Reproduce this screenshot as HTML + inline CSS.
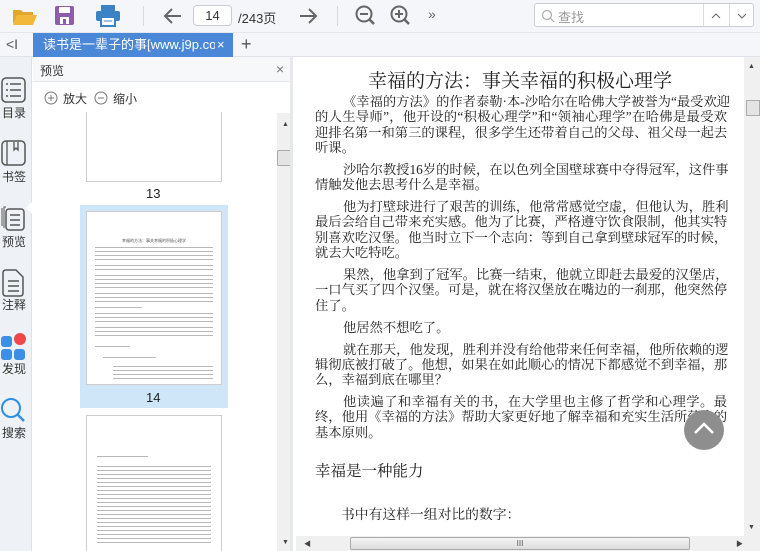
<!DOCTYPE html>
<html><head><meta charset="utf-8"><style>
*{margin:0;padding:0;box-sizing:border-box}
body{width:760px;height:551px;overflow:hidden;background:#fff;font-family:"Liberation Sans","Noto Sans CJK SC",sans-serif;position:relative;font-size:12px;color:#333}
.abs{position:absolute}
#tb{left:0;top:0;width:760px;height:33px;background:#f4f6f9;border-bottom:1px solid #e3e6ea}
#tabs{left:0;top:33px;width:760px;height:24px;background:#f4f6f9;border-bottom:1px solid #dfe3e8}
#side{left:0;top:57px;width:32px;height:494px;background:#eef1f5;border-right:1px solid #dde1e6}
.sl{position:absolute;left:0;width:28px;text-align:center;font-size:12px;color:#333}
#prev{left:33px;top:57px;width:260px;height:494px;background:#fff;border-right:3px solid #e6e8eb;overflow:hidden}
#main{left:296px;top:57px;width:448px;height:479px;background:#fff;overflow:hidden}
#doc{position:absolute;left:19px;top:9px;width:412px;font-family:"Liberation Serif","Noto Serif CJK SC",serif;font-size:13.3px;line-height:15.3px;color:#222}
#doc p{margin-bottom:6.7px}
#doc p span{display:block;white-space:nowrap;text-align:justify;text-align-last:justify}
#doc p span.l{text-align-last:left}
#doc p span.i{padding-left:28px}
.page{position:absolute;left:53px;width:136px;background:#fff;border:1px solid #ccc;overflow:hidden}
.ln{background:repeating-linear-gradient(#888 0 1px,transparent 1px 4px);opacity:.6}
</style></head><body>
<div id="tb" class="abs">
 <svg class="abs" style="left:12px;top:6px" width="26" height="20"><path d="M1 4h8l2 2h10v3H6L1 18z" fill="#e2a52d"/><path d="M5 9h20l-4 10H1z" fill="#f1b83a"/></svg>
 <svg class="abs" style="left:55px;top:6px" width="19" height="19"><rect x="0" y="0" width="19" height="19" rx="2" fill="#8e5bb0"/><rect x="4" y="1" width="11" height="6" fill="#fff"/><rect x="5" y="11" width="9" height="7" fill="#fff"/><rect x="8" y="13" width="3" height="5" fill="#8e5bb0"/></svg>
 <svg class="abs" style="left:96px;top:5px" width="24" height="22"><rect x="5" y="0" width="14" height="6" fill="#3b83c4"/><rect x="0" y="6" width="24" height="10" rx="2" fill="#3b83c4"/><rect x="5" y="12" width="14" height="9" fill="#fff" stroke="#3b83c4" stroke-width="2"/><line x1="8" y1="16" x2="16" y2="16" stroke="#3b83c4"/></svg>
 <div class="abs" style="left:143px;top:6px;width:1px;height:20px;background:#d8dbe0"></div>
 <svg class="abs" style="left:163px;top:7px" width="20" height="18"><path d="M18 9H3M9 2L2 9l7 7" fill="none" stroke="#666" stroke-width="2"/></svg>
 <div class="abs" style="left:193px;top:5px;width:39px;height:21px;border:1px solid #c9cdd3;border-radius:4px;background:#fff;text-align:center;line-height:19px;font-size:13px">14</div>
 <div class="abs" style="left:238px;top:8px;font-size:13px;color:#333">/243页</div>
 <svg class="abs" style="left:298px;top:7px" width="20" height="18"><path d="M2 9h15M11 2l7 7-7 7" fill="none" stroke="#666" stroke-width="2"/></svg>
 <div class="abs" style="left:337px;top:6px;width:1px;height:20px;background:#d8dbe0"></div>
 <svg class="abs" style="left:355px;top:5px" width="22" height="22"><circle cx="9" cy="9" r="7.5" fill="none" stroke="#666" stroke-width="2"/><line x1="5" y1="9" x2="13" y2="9" stroke="#666" stroke-width="2"/><line x1="14" y1="14" x2="19" y2="19" stroke="#666" stroke-width="2.5"/></svg>
 <svg class="abs" style="left:390px;top:5px" width="22" height="22"><circle cx="9" cy="9" r="7.5" fill="none" stroke="#666" stroke-width="2"/><path d="M5 9h8M9 5v8" stroke="#666" stroke-width="2"/><line x1="14" y1="14" x2="19" y2="19" stroke="#666" stroke-width="2.5"/></svg>
 <div class="abs" style="left:428px;top:6px;font-size:14px;color:#666">»</div>
 <div class="abs" style="left:534px;top:3px;width:220px;height:24px;border:1px solid #c9cdd3;border-radius:3px;background:#fff">
  <svg class="abs" style="left:6px;top:5px" width="14" height="14"><circle cx="6" cy="6" r="4.5" fill="none" stroke="#aaa" stroke-width="1.2"/><line x1="9.5" y1="9.5" x2="13" y2="13" stroke="#aaa" stroke-width="1.2"/></svg>
  <div class="abs" style="left:23px;top:3px;font-size:13px;color:#999">查找</div>
  <div class="abs" style="left:168px;top:0;width:1px;height:22px;background:#d8dbe0"></div>
  <div class="abs" style="left:194px;top:0;width:1px;height:22px;background:#d8dbe0"></div>
  <svg class="abs" style="left:176px;top:9px" width="10" height="6"><path d="M1 5l4-4 4 4" fill="none" stroke="#666"/></svg>
  <svg class="abs" style="left:202px;top:9px" width="10" height="6"><path d="M1 1l4 4 4-4" fill="none" stroke="#666"/></svg>
 </div>
</div>
<div id="tabs" class="abs">
 <div class="abs" style="left:6px;top:3px;font-size:14px;color:#555">&lt;I</div>
 <div class="abs" style="left:33px;top:0;width:200px;height:24px;background:#4a87d6;color:#fff;font-size:13px;line-height:24px;padding-left:10px;white-space:nowrap;overflow:hidden">读书是一辈子的事[www.j9p.cor<span style="position:absolute;left:182px;background:#4a87d6;padding-left:2px">×</span></div>
 <div class="abs" style="left:241px;top:0;font-size:18px;color:#555;line-height:22px">+</div>
</div>
<div id="side" class="abs">
 <svg class="abs" style="left:1px;top:20px" width="25" height="26"><rect x="1" y="1" width="23" height="24" rx="4" fill="none" stroke="#555" stroke-width="1.5"/><path d="M5 7h2M9 7h11M5 13h2M9 13h11M5 19h2M9 19h11" stroke="#555" stroke-width="1.5"/></svg>
 <div class="sl" style="top:47px">目录</div>
 <svg class="abs" style="left:1px;top:83px" width="25" height="26"><rect x="1" y="1" width="23" height="24" rx="4" fill="none" stroke="#555" stroke-width="1.5"/><path d="M6 1v24M13 2v8l2-2 2 2V2" fill="none" stroke="#555" stroke-width="1.3"/></svg>
 <div class="sl" style="top:111px">书签</div>
 <svg class="abs" style="left:0px;top:147px" width="26" height="28"><path d="M2 22V4M4 24V3h2" fill="none" stroke="#555" stroke-width="1"/><rect x="6" y="5" width="18" height="21" rx="3" fill="none" stroke="#555" stroke-width="1.5"/><path d="M10 11h10M10 16h10M10 21h10" stroke="#555" stroke-width="1.5"/></svg>
 <div class="sl" style="top:176px">预览</div>
 <svg class="abs" style="left:2px;top:212px" width="23" height="28"><path d="M1 4q0-3 3-3h10l7 7v16q0 3-3 3H4q-3 0-3-3z" fill="none" stroke="#555" stroke-width="1.5"/><path d="M6 12h11M6 17h11M6 22h11" stroke="#555" stroke-width="1.5"/></svg>
 <div class="sl" style="top:239px">注释</div>
 <div class="abs" style="left:1px;top:279px;width:11px;height:11px;border-radius:3px;background:#3d8fe6"></div>
 <div class="abs" style="left:14px;top:276px;width:12px;height:12px;border-radius:50%;background:#f0474a"></div>
 <div class="abs" style="left:1px;top:292px;width:11px;height:11px;border-radius:3px;background:#3d8fe6"></div>
 <div class="abs" style="left:14px;top:292px;width:11px;height:11px;border-radius:3px;background:#3d8fe6"></div>
 <div class="sl" style="top:303px">发现</div>
 <svg class="abs" style="left:0px;top:340px" width="26" height="26"><circle cx="11" cy="11" r="9" fill="none" stroke="#2f8fe0" stroke-width="2"/><line x1="17" y1="17" x2="24" y2="24" stroke="#2f8fe0" stroke-width="2.5"/></svg>
 <div class="sl" style="top:367px">搜索</div>
</div>
<div class="abs" style="left:26px;top:201px;width:0;height:0;border-top:7px solid transparent;border-bottom:7px solid transparent;border-right:7px solid #fff"></div>
<div id="prev" class="abs">
 <div class="abs" style="left:0;top:0;width:260px;height:25px;border-bottom:1px solid #e3e6ea;background:#f7f8fa"></div>
 <div class="abs" style="left:7px;top:5px;font-size:12px">预览</div>
 <div class="abs" style="left:243px;top:4px;font-size:14px;color:#777">×</div>
 <svg class="abs" style="left:11px;top:34px" width="14" height="14"><circle cx="7" cy="7" r="6" fill="none" stroke="#777"/><path d="M4 7h6M7 4v6" stroke="#777"/></svg>
 <div class="abs" style="left:30px;top:33px;font-size:12px">放大</div>
 <svg class="abs" style="left:61px;top:34px" width="14" height="14"><circle cx="7" cy="7" r="6" fill="none" stroke="#777"/><path d="M4 7h6" stroke="#777"/></svg>
 <div class="abs" style="left:80px;top:33px;font-size:12px">缩小</div>
 <div class="abs" style="left:0;top:55px;width:244px;height:439px;overflow:hidden">
  <div class="page" style="top:-10px;height:80px"></div>
  <div class="abs" style="left:113px;top:74px;font-size:13px;color:#222">13</div>
  <div class="abs" style="left:47px;top:93px;width:148px;height:203px;background:#cfe5f8"></div>
  <div class="page" style="top:99px;height:174px;padding:26px 8px 0 8px;font-family:serif">
   <div style="text-align:center;font-size:4px;line-height:5px;color:#555;margin-bottom:4px">幸福的方法：事关幸福的积极心理学</div>
   <div class="ln" style="height:16px;margin-bottom:2px"></div>
   <div class="ln" style="height:8px;margin-bottom:2px"></div>
   <div class="ln" style="height:16px;margin-bottom:2px"></div>
   <div class="ln" style="height:12px;margin-bottom:2px"></div>
   <div class="ln" style="height:4px;width:40%;margin-bottom:2px"></div>
   <div class="ln" style="height:12px;margin-bottom:2px"></div>
   <div class="ln" style="height:12px;margin-bottom:7px"></div>
   <div class="ln" style="height:4px;width:30%;margin-bottom:7px"></div>
   <div class="ln" style="height:4px;width:45%;margin:0 0 5px 8px"></div>
   <div class="ln" style="height:16px;margin-left:18px"></div>
  </div>
  <div class="abs" style="left:113px;top:278px;font-size:13px;color:#222">14</div>
  <div class="page" style="top:303px;height:140px;padding:40px 10px 0 10px">
   <div class="ln" style="height:4px;width:45%;margin-bottom:6px"></div>
   <div class="ln" style="height:80px"></div>
  </div>
 </div>
 <div class="abs" style="left:244px;top:56px;width:16px;height:438px;background:#f0f0f0"></div>
 <div class="abs" style="left:249px;top:64px;font-size:7px;color:#444">▲</div>
 <div class="abs" style="left:244px;top:93px;width:15px;height:16px;background:#e4e4e4;border:1px solid #aaa;border-radius:2px"></div>
</div>
<div id="main" class="abs">
 <div style="position:absolute;left:0;top:9px;width:448px;text-align:center;font-family:'Liberation Serif','Noto Serif CJK SC',serif;font-size:19px;color:#222">幸福的方法：事关幸福的积极心理学</div>
 <div id="doc" style="top:37px">
  <p><span class="i">《幸福的方法》的作者泰勒·本-沙哈尔在哈佛大学被誉为“最受欢迎</span><span>的人生导师”，他开设的“积极心理学”和“领袖心理学”在哈佛是最受欢</span><span>迎排名第一和第三的课程，很多学生还带着自己的父母、祖父母一起去</span><span class="l">听课。</span></p>
  <p><span class="i">沙哈尔教授16岁的时候，在以色列全国壁球赛中夺得冠军，这件事</span><span class="l">情触发他去思考什么是幸福。</span></p>
  <p><span class="i">他为打壁球进行了艰苦的训练，他常常感觉空虚，但他认为，胜利</span><span>最后会给自己带来充实感。他为了比赛，严格遵守饮食限制，他其实特</span><span>别喜欢吃汉堡。他当时立下一个志向：等到自己拿到壁球冠军的时候，</span><span class="l">就去大吃特吃。</span></p>
  <p><span class="i">果然，他拿到了冠军。比赛一结束，他就立即赶去最爱的汉堡店，</span><span>一口气买了四个汉堡。可是，就在将汉堡放在嘴边的一刹那，他突然停</span><span class="l">住了。</span></p>
  <p><span class="i l">他居然不想吃了。</span></p>
  <p><span class="i">就在那天，他发现，胜利并没有给他带来任何幸福，他所依赖的逻</span><span>辑彻底被打破了。他想，如果在如此顺心的情况下都感觉不到幸福，那</span><span class="l">么，幸福到底在哪里？</span></p>
  <p><span class="i">他读遍了和幸福有关的书，在大学里也主修了哲学和心理学。最</span><span>终，他用《幸福的方法》帮助大家更好地了解幸福和充实生活所蕴含的</span><span class="l">基本原则。</span></p>
 </div>
 <div style="position:absolute;left:19px;top:402px;font-family:'Liberation Serif','Noto Serif CJK SC',serif;font-size:15.5px;color:#222">幸福是一种能力</div>
 <div style="position:absolute;left:45px;top:446px;font-family:'Liberation Serif','Noto Serif CJK SC',serif;font-size:13.8px;color:#222">书中有这样一组对比的数字：</div>
 <div style="position:absolute;left:97px;top:475px;font-family:'Liberation Serif','Noto Serif CJK SC',serif;font-size:13.8px;color:#222;white-space:nowrap">心理学家蒂科说，上世纪最早的研究抑郁症的学者，多数是</div>
 <div style="position:absolute;left:388px;top:353px;width:40px;height:40px;border-radius:50%;background:#8e8e8e"></div>
 <svg style="position:absolute;left:396px;top:363px" width="24" height="16"><path d="M3 13L12 4l9 9" fill="none" stroke="#fff" stroke-width="2.5"/></svg>
</div>
<div class="abs" style="left:744px;top:57px;width:16px;height:494px;background:#f0f0f0"></div>
<div class="abs" style="left:748px;top:63px;font-size:7px;color:#444">▲</div>
<div class="abs" style="left:746px;top:100px;width:14px;height:16px;background:#e4e4e4;border:1px solid #aaa"></div>
<div class="abs" style="left:748px;top:524px;font-size:7px;color:#444">▼</div>
<div class="abs" style="left:296px;top:536px;width:448px;height:15px;background:#f0f0f0"></div>
<div class="abs" style="left:304px;top:539px;font-size:7px;color:#444">◀</div>
<div class="abs" style="left:350px;top:537px;width:340px;height:13px;background:linear-gradient(#f4f4f4,#dcdcdc);border:1px solid #aaa;border-radius:2px;text-align:center;font-size:8px;line-height:11px;color:#555">III</div>
<div class="abs" style="left:736px;top:539px;font-size:7px;color:#444">▶</div>
<div class="abs" style="left:282px;top:539px;font-size:7px;color:#444">▼</div>
</body></html>
